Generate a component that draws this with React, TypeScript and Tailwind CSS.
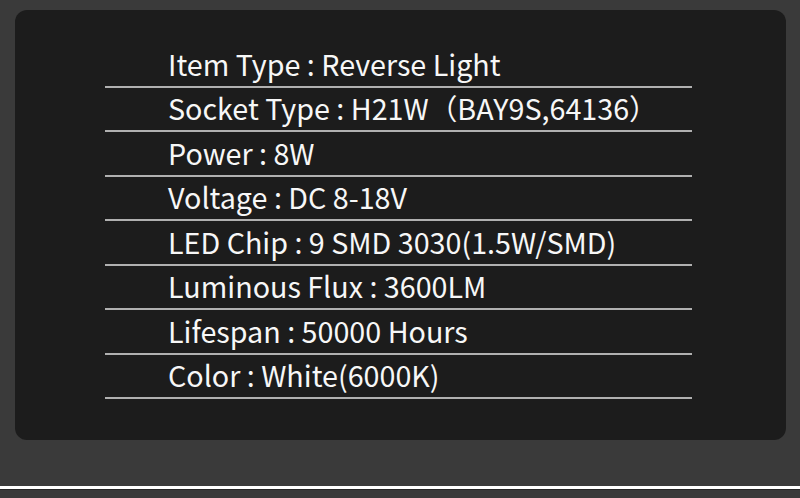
import React from 'react';

const specs = [
  'Item Type : Reverse Light',
  'Socket Type : H21W（BAY9S,64136）',
  'Power : 8W',
  'Voltage : DC 8-18V',
  'LED Chip : 9 SMD 3030(1.5W/SMD)',
  'Luminous Flux : 3600LM',
  'Lifespan : 50000 Hours',
  'Color : White(6000K)',
];

const App: React.FC = () => {
  return (
    <div
      className="w-[800px] h-[498px] bg-[#3a3a3a] flex flex-col overflow-hidden"
      style={{ fontFamily: '"Noto Sans CJK SC", "Noto Sans", sans-serif' }}
    >
      <div className="mt-[10px] ml-[15px] w-[771px] h-[430px] rounded-[12px] bg-[#1c1c1c] pt-[33px]">
        <ul className="ml-[90px] w-[587px]">
          {specs.map((s) => (
            <li
              key={s}
              className="h-[44.5px] border-b-2 border-[#b0b0b0] pl-[63px] flex items-center text-[28.7px] leading-none text-[#f7f7f7]"
            >
              <span>{s}</span>
            </li>
          ))}
        </ul>
      </div>
      <div className="mt-[46px] h-[3px] bg-white" />
      <div className="h-[1px] bg-[#262626]" />
      <div className="flex-1 bg-[#3a3a3a]" />
    </div>
  );
};

export default App;
